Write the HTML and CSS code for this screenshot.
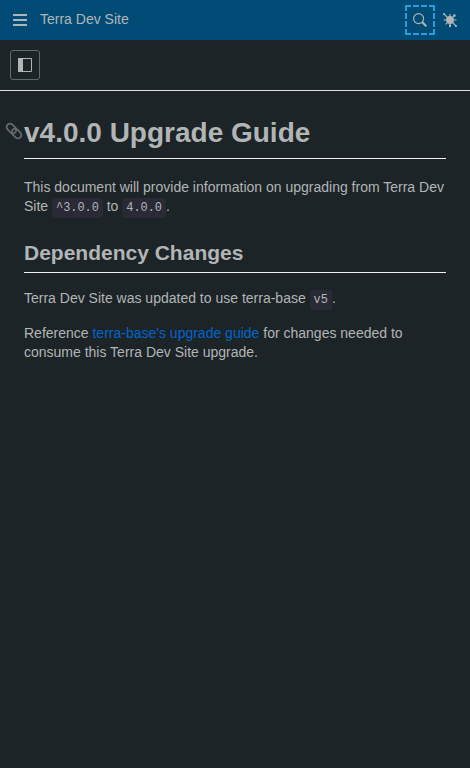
FILE: index.html
```html
<!DOCTYPE html>
<html lang="en">
<head>
<meta charset="utf-8">
<title>Terra Dev Site</title>
<link rel="stylesheet" href="styles.css">
</head>
<body>
<header class="header">
  <button class="icon-button" aria-label="Menu">
    <svg width="14" height="14" viewBox="0 0 14 14"><path d="M0 1h14v2H0zM0 6h14v2H0zM0 11h14v2H0z"/></svg>
  </button>
  <span class="site-title">Terra Dev Site</span>
  <button class="icon-button search focused" aria-label="Search">
    <svg width="14" height="14" viewBox="0 0 14 14"><circle cx="5.6" cy="5.6" r="5" class="line lens"/><path d="M9 9l4.3 4.3" class="handle"/></svg>
  </button>
  <button class="icon-button" aria-label="Settings">
    <svg width="14" height="14" viewBox="0 0 14 14"><circle cx="7" cy="7" r="3.9"/><path d="M7 1v12M.5 7h13M1 1l12 12M2.6 11.4l8.8-8.8" class="line ray"/><circle cx="1" cy="1" r="1.1"/><circle cx="13" cy="13" r="1.1"/><circle cx="11.4" cy="2.6" r="1.3"/><path d="M6 11.5h2V14H6z"/></svg>
  </button>
</header>
<div class="toolbar">
  <button class="panel-button" aria-label="Toggle panel">
    <svg width="14" height="14" viewBox="0 0 14 14"><path d="M0 0h4v14H0z"/><path d="M.5.5h13v13H.5zM4.5 1v12" class="line"/></svg>
  </button>
</div>
<main class="content">
  <h1><a class="anchor" href="#top" id="top" aria-label="Link to heading"><svg width="16" height="16" viewBox="0 0 16 16"><g transform="rotate(45 8 8)"><rect x="-1" y="4.6" width="10.8" height="6.8" rx="3.4"/><rect x="6.2" y="4.6" width="10.8" height="6.8" rx="3.4"/></g></svg></a>v4.0.0 Upgrade Guide</h1>
  <p>This document will provide information on upgrading from Terra Dev Site <code>^3.0.0</code> to <code>4.0.0</code>.</p>
  <h2>Dependency Changes</h2>
  <p>Terra Dev Site was updated to use terra-base <code>v5</code>.</p>
  <p>Reference <a class="link" href="#top">terra-base's upgrade guide</a> for changes needed to consume this Terra Dev Site upgrade.</p>
</main>
</body>
</html>
```
FILE: styles.css
```css
* { box-sizing: border-box; }
body {
  margin: 0;
  min-height: 100vh;
  background: #1c2427;
  color: #b2b5b6;
  font: 14px/19px "Liberation Sans", Arial, sans-serif;
}
button {
  display: flex;
  align-items: center;
  justify-content: center;
  width: 30px;
  height: 30px;
  padding: 0;
  border: 0;
  background: none;
  color: inherit;
}
svg { display: block; fill: currentColor; overflow: visible; }
.line { fill: none; stroke: currentColor; stroke-width: 1; }
.lens { stroke-width: 1.15; }
.ray { stroke-width: 1.1; }
.handle { fill: none; stroke: currentColor; stroke-width: 2; }
.header {
  display: flex;
  align-items: center;
  height: 40px;
  padding: 0 5px;
  background: #004c76;
}
.site-title { margin-left: 5px; padding-bottom: 2px; }
.search { margin-left: auto; }
.focused { outline: 2px dashed #2f9ad8; outline-offset: -2px; }
.toolbar { padding: 10px; border-bottom: 1px solid #dedfe0; }
.panel-button { border: 1px solid #64696c; border-radius: 3px; }
.content { padding: 24px 24px 0; }
h1, h2 { margin: 0; border-bottom: 1px solid #f0f1f2; }
h1 { position: relative; padding-bottom: 8px; font-size: 28px; line-height: 35px; }
h2 { margin-top: 23px; padding-bottom: 6px; font-size: 21px; line-height: 27px; }
p { margin: 16px 0; }
h1 + p { margin-top: 19px; }
.anchor { position: absolute; left: -18px; top: 8px; color: #64696c; }
.anchor svg { fill: none; stroke: currentColor; stroke-width: 1.8; }
code {
  padding: 3px 4px;
  border-radius: 3px;
  background: #292a36;
  font: 11.9px "Liberation Mono", monospace;
}
.link { color: #0065cc; text-decoration: none; }
```
